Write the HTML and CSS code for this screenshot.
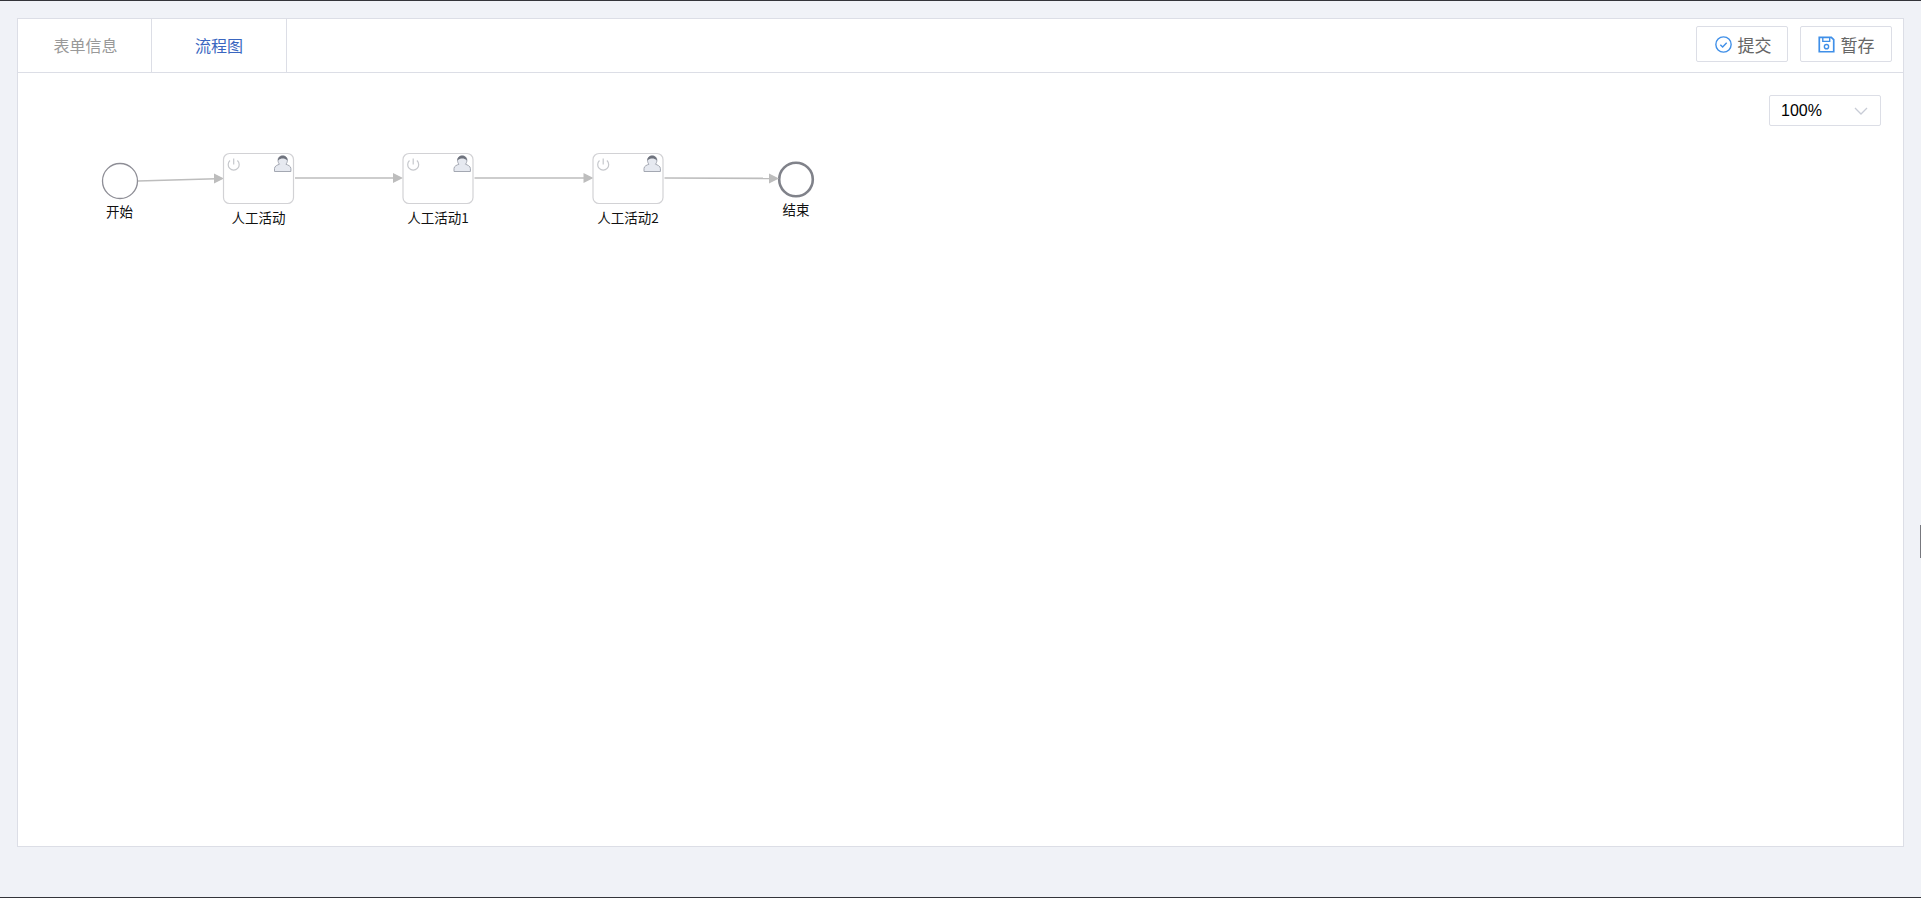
FILE: index.html
```html
<!DOCTYPE html>
<html lang="zh-CN">
<head>
<meta charset="utf-8">
<title>流程图</title>
<link rel="stylesheet" href="styles.css">
</head>
<body>
<div class="page">
  <div class="panel">
    <header class="header">
      <nav class="tabs">
        <a class="tab tab-form">表单信息</a>
        <a class="tab tab-active">流程图</a>
      </nav>
      <div class="actions">
        <button class="btn btn-submit">
          <svg class="btn-icon" viewBox="0 0 16 16"><circle cx="8" cy="8" r="7.2" class="ic"/><path d="M5 8.2l2.2 2.2L11 6.3" class="ic"/></svg>
          <span>提交</span>
        </button>
        <button class="btn">
          <svg class="btn-icon" viewBox="0 0 16 16"><path d="M1.2 1.2h11.300l2.300 2.300v11.300H1.200z" class="ic ic-bold"/><path d="M4.500 1.500v3.600h6.500V1.500" class="ic"/><circle cx="8" cy="10" r="2" class="ic"/></svg>
          <span>暂存</span>
        </button>
      </div>
    </header>
    <main class="canvas">
      <svg class="diagram" width="1885" height="773" viewBox="18 73 1885 773">
        <defs>
          <g id="task">
            <rect x="0.5" y="0.5" width="70" height="50" rx="6" class="task-box"/>
            <path d="M7 7.500a5.500 5.500 0 1 0 7.400 0" class="power"/>
            <path d="M10.700 5.500v6" class="power"/>
            <path d="M51.500 18.500v-3c0-2.500 3-3.500 5-4.300c-1-1-1.500-2.500-1.500-4c0-2.500 2-4.400 4.700-4.400s4.700 1.900 4.700 4.400c0 1.500-.5 3-1.500 4c2 .8 5 1.800 5 4.300v3z" class="user"/>
            <path d="M55 7.500c-.2-3 2-4.700 4.700-4.700s4.900 1.700 4.700 4.700c-1.500-1.500-3-2-4.700-2s-3.200.5-4.700 2z" class="user-hair"/>
          </g>
        </defs>

        <circle cx="120" cy="181" r="17.500" class="ev-start"/>
        <circle cx="796" cy="179.500" r="16.800" class="ev-end"/>

        <path d="M138 181L216 178.800" class="flow"/>
        <path d="M224 178.500l-10-5v10z" class="head"/>
        <path d="M295 178H394" class="flow"/>
        <path d="M403 178l-10-5v10z" class="head"/>
        <path d="M474.500 178H585" class="flow"/>
        <path d="M593.500 178l-10-5v10z" class="head"/>
        <path d="M664.500 178L772 178.400" class="flow"/>
        <path d="M779 178.500l-10-5v10z" class="head"/>

        <use href="#task" x="223" y="153"/>
        <use href="#task" x="402.500" y="153"/>
        <use href="#task" x="592.500" y="153"/>

        <text x="119.500" y="217" class="label">开始</text>
        <text x="258.500" y="223" class="label">人工活动</text>
        <text x="438" y="223" class="label">人工活动1</text>
        <text x="628" y="223" class="label">人工活动2</text>
        <text x="796" y="215" class="label">结束</text>
      </svg>
      <div class="zoom-select">
        <span>100%</span>
        <svg class="chev" viewBox="0 0 14 8"><path d="M1 1l6 6 6-6"/></svg>
      </div>
    </main>
  </div>
  <div class="edge-mark"></div>
</div>
</body>
</html>
```

FILE: styles.css
```css
* { box-sizing: border-box; }
html, body { margin: 0; height: 100%; }
body {
  background: #f0f2f7;
  font-family: "Noto Sans CJK SC", "Liberation Sans", sans-serif;
  overflow: hidden;
}
.page {
  position: relative;
  height: 898px;
  padding: 17px 17px 50px;
  border-top: 1px solid #33343a;
  border-bottom: 1px solid #33343a;
  display: flex;
}
.panel {
  flex: 1;
  display: flex;
  flex-direction: column;
  background: #fff;
  border: 1px solid #dcdee6;
}
.header {
  flex: none;
  height: 54px;
  display: flex;
  justify-content: space-between;
  align-items: stretch;
  border-bottom: 1px solid #dcdee6;
}
.tabs { display: flex; }
.tab {
  width: 134px;
  padding-bottom: 2px;
  display: flex;
  align-items: center;
  justify-content: center;
  font-size: 16px;
  color: #999;
  border-right: 1px solid #dcdee6;
}
.tab-form { padding-left: 2px; }
.tab-active { width: 135px; color: #3a66c0; }
.actions {
  display: flex;
  align-items: flex-start;
  gap: 12px;
  padding: 7px 11px 0 0;
}
.btn {
  width: 92px;
  height: 36px;
  display: flex;
  align-items: center;
  justify-content: center;
  gap: 6px;
  padding: 0;
  background: #fff;
  border: 1px solid #dcdee6;
  border-radius: 2px;
  font: 17px "Noto Sans CJK SC", "Liberation Sans", sans-serif;
  color: #666;
}
.btn-submit { padding-left: 2px; }
.btn-icon { width: 17px; height: 17px; }
.ic { fill: none; stroke: #3f8fe8; stroke-width: 1.300; }
.ic-bold { stroke-width: 1.600; }
.canvas { position: relative; flex: 1; min-height: 0; }
.diagram { position: absolute; left: 0; top: 0; }
.zoom-select {
  position: absolute;
  top: 22px;
  right: 22px;
  width: 112px;
  height: 31px;
  padding: 0 12px 0 11px;
  display: flex;
  align-items: center;
  justify-content: space-between;
  background: #fff;
  border: 1px solid #dcdee6;
  border-radius: 2px;
  font: 16px "Liberation Sans", sans-serif;
  color: #000;
}
.chev { width: 14px; height: 8px; }
.chev path { fill: none; stroke: #c8ccd6; stroke-width: 1.300; }
.ev-start { fill: #fff; stroke: #8e8e96; stroke-width: 1.300; }
.ev-end { fill: #fff; stroke: #80828a; stroke-width: 2.600; }
.flow { fill: none; stroke: #bdbdbd; stroke-width: 1.600; }
.head { fill: #bdbdbd; }
.task-box { fill: #fff; stroke: #d2d2d5; stroke-width: 1.200; }
.power { fill: none; stroke: #c6c8cc; stroke-width: 1.200; }
.user { fill: #e6e9f0; stroke: #a4a8b2; stroke-width: 1; }
.user-hair { fill: #6f737d; }
.label {
  font: 13.500px "Noto Sans CJK SC", "Liberation Sans", sans-serif;
  fill: #111;
  text-anchor: middle;
}
.edge-mark {
  position: absolute;
  right: 0;
  top: 524px;
  width: 1px;
  height: 33px;
  background: #77787e;
}
```
